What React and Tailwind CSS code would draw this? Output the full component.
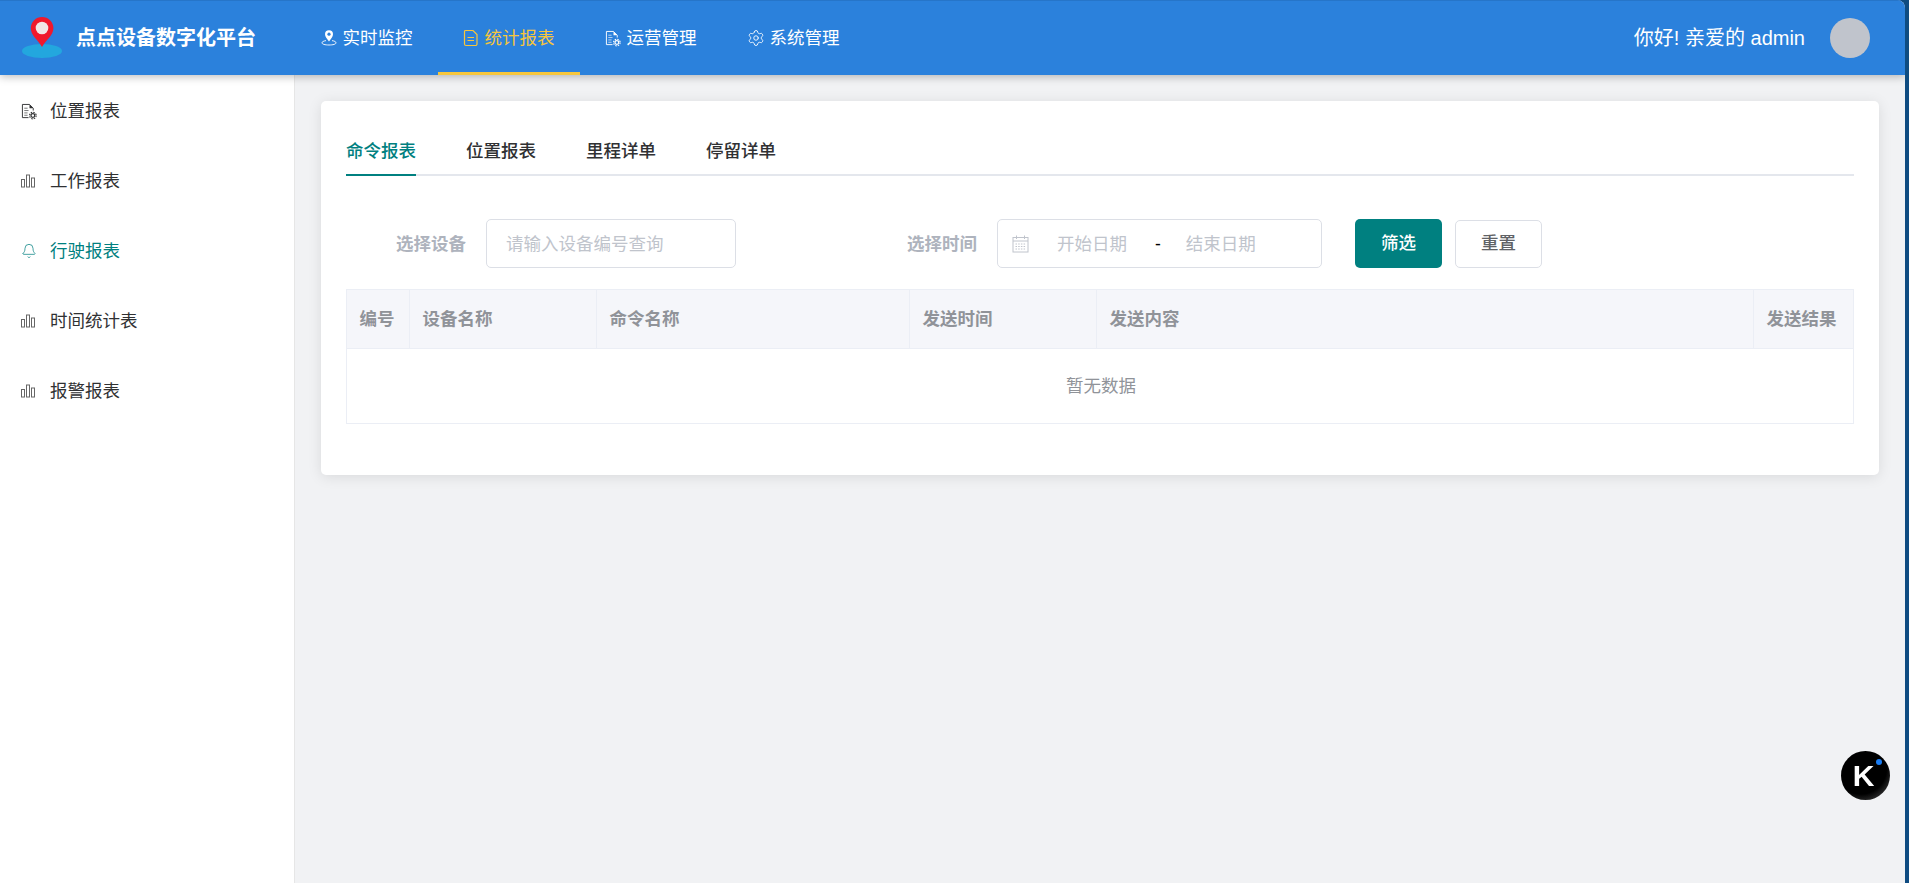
import { Settings, Bell } from "lucide-react";

const Logo = () => (
  <svg width="42" height="42" viewBox="0 0 42 42" className="shrink-0">
    <ellipse cx="21" cy="34" rx="20" ry="7" fill="#23a7de" />
    <path d="M21 30 C17 23 9.8 18.5 9.8 11.3 A11.3 11.3 0 0 1 32.4 11.3 C32.4 18.5 25 23 21 30 Z" fill="#f0182c" />
    <circle cx="21" cy="11" r="6.3" fill="#f1e6e6" />
  </svg>
);

const PinIcon = () => (
  <svg width="16" height="18" viewBox="0 0 16 18" fill="none" stroke="currentColor" className="shrink-0">
    <path
      d="M8 12.5 C6 9.5 4 7.8 4 5.2 A4 4 0 0 1 12 5.2 C12 7.8 10 9.5 8 12.5 Z"
      fill="currentColor"
      stroke="none"
    />
    <circle cx="8" cy="5.2" r="1.6" fill="#2b81dc" stroke="none" />
    <path d="M5 11.6 C2.4 12 1 12.8 1 13.8 C1 15.2 4 16 8 16 C12 16 15 15.2 15 13.8 C15 12.8 13.6 12 11 11.6" strokeWidth="0.9" />
  </svg>
);

const DocIcon = () => (
  <svg width="16" height="18" viewBox="0 0 16 18" fill="none" stroke="currentColor" strokeWidth="1.2" className="shrink-0">
    <path d="M2.5 1.5 H10 L14 5.5 V15 A1.5 1.5 0 0 1 12.5 16.5 H3 A1.5 1.5 0 0 1 1.5 15 V2.5 A1 1 0 0 1 2.5 1.5 Z" />
    <path d="M4.5 8.5 H11 M4.5 11.5 H11" />
  </svg>
);

const DocGearIcon = () => (
  <svg width="16" height="17" viewBox="0 0 17 18" fill="none" stroke="currentColor" className="shrink-0">
    <path d="M8 15.5 H1.5 V1.5 H9 L13 5.5 V8" strokeWidth="1" />
    <path d="M9 1.5 L13 5.5 H9 Z" fill="currentColor" stroke="none" />
    <path d="M3.5 5.5 H7 M3.5 8 H8 M3.5 10.5 H7 M3.5 13 H7" strokeWidth="1" opacity="0.7" />
    <circle cx="12.6" cy="13.3" r="2" strokeWidth="1.3" />
    <circle cx="12.6" cy="13.3" r="3.5" strokeWidth="1.2" strokeDasharray="1.6 1.15" />
  </svg>
);

const BarsIcon = () => (
  <svg width="15" height="14" viewBox="0 0 15 14" fill="none" stroke="#666" strokeWidth="1" className="shrink-0">
    <rect x="0.5" y="5.5" width="3" height="7.5" />
    <rect x="5.5" y="1" width="3" height="12" />
    <rect x="10.5" y="4" width="3" height="9" />
  </svg>
);

const DateIcon = () => (
  <svg width="17" height="18" viewBox="0 0 17 18" fill="none" stroke="currentColor" strokeWidth="1" className="shrink-0">
    <rect x="1" y="2.5" width="15" height="14.5" />
    <path d="M1 6 H16 M4.5 0.5 V4 M12.5 0.5 V4" />
    <path d="M3.5 9 H13.5 M3.5 11.5 H13.5 M3.5 14 H13.5" strokeDasharray="1.5 1.2" />
  </svg>
);

const navItems = [
  { label: "实时监控", icon: <PinIcon /> },
  { label: "统计报表", icon: <DocIcon />, active: true },
  { label: "运营管理", icon: <DocGearIcon /> },
  { label: "系统管理", icon: <Settings size={18} strokeWidth={1.2} className="-mr-[1px] shrink-0" /> },
];

const sideItems = [
  { label: "位置报表", icon: <DocGearIcon /> },
  { label: "工作报表", icon: <BarsIcon /> },
  { label: "行驶报表", icon: <Bell size={16} strokeWidth={1.1} className="shrink-0" />, active: true },
  { label: "时间统计表", icon: <BarsIcon /> },
  { label: "报警报表", icon: <BarsIcon /> },
];

const tabs = ["命令报表", "位置报表", "里程详单", "停留详单"];

const columns = [
  { label: "编号", width: "w-[63px]" },
  { label: "设备名称", width: "w-[187px]" },
  { label: "命令名称", width: "w-[313px]" },
  { label: "发送时间", width: "w-[187px]" },
  { label: "发送内容", width: "flex-1" },
  { label: "发送结果", width: "w-[99px]" },
];

const App = () => {
  return (
    <div className="flex h-[883px] w-full overflow-hidden bg-[#0f4c81] font-['Liberation_Sans','Noto_Sans_CJK_SC',sans-serif] text-[17.5px]">
      <div className="flex min-w-0 flex-1 flex-col rounded-tr-[8px] overflow-hidden bg-[#f1f2f4]">
        {/* Header */}
        <header className="relative z-10 flex h-[75px] shrink-0 items-center border-t border-[#2675c9] bg-[#2b81dc] pl-[21px] pr-[35px] text-white shadow-[0_2px_8px_rgba(0,0,0,0.25)]">
          <Logo />
          <h1 className="ml-[13px] w-[178px] whitespace-nowrap text-[20px] font-bold">点点设备数字化平台</h1>
          <nav className="ml-[41.5px] flex h-full">
            {navItems.map((item) => (
              <div
                key={item.label}
                className={
                  item.active
                    ? "flex h-full items-center gap-[6px] border-b-[3px] border-[#f7c63c] px-[25px] pt-[3px] text-[#f7c63c]"
                    : "flex h-full items-center gap-[6px] px-[25px]"
                }
              >
                {item.icon}
                <span>{item.label}</span>
              </div>
            ))}
          </nav>
          <div className="ml-auto flex items-center">
            <span className="text-[20px]">你好! 亲爱的 admin</span>
            <div className="ml-[25px] h-[40px] w-[40px] rounded-full bg-[#c0c4cc]" />
          </div>
        </header>

        <div className="flex min-h-0 flex-1">
          {/* Sidebar */}
          <aside className="w-[295px] shrink-0 border-r border-[#e6e6e6] bg-white pt-[1px]">
            {sideItems.map((item) => (
              <div
                key={item.label}
                className={
                  item.active
                    ? "flex h-[70px] items-center pl-[21px] text-[#008080]"
                    : "flex h-[70px] items-center pl-[21px] text-[#303133]"
                }
              >
                <span className="flex w-[29px]">{item.icon}</span>
                <span>{item.label}</span>
              </div>
            ))}
          </aside>

          {/* Content */}
          <main className="min-w-0 flex-1 p-[26px]">
            <div className="rounded-[5px] bg-white px-[25px] pb-[51px] pt-[25px] shadow-[0_2px_14px_rgba(0,0,0,0.1)]">
              <div className="flex h-[50px] gap-[50px] border-b-2 border-[#e4e7ed]">
                {tabs.map((tab, i) => (
                  <div
                    key={tab}
                    className={
                      i === 0
                        ? "-mb-[2px] flex items-center border-b-2 border-[#008080] pt-[3px] font-medium text-[#008080]"
                        : "flex items-center pt-[3px] font-medium text-[#303133]"
                    }
                  >
                    {tab}
                  </div>
                ))}
              </div>

              {/* Filter */}
              <div className="mt-[43px] flex h-[49px] items-center">
                <label className="ml-[50px] pt-[1px] font-bold text-[#aeb3bd]">选择设备</label>
                <div className="ml-[20px] flex h-full w-[250px] items-center rounded-[5px] border border-[#dcdfe6] pl-[19px] pt-[1px] text-[#c0c4cc]">
                  请输入设备编号查询
                </div>
                <label className="ml-[171px] pt-[1px] font-bold text-[#aeb3bd]">选择时间</label>
                <div className="ml-[20px] flex h-full w-[325px] items-center rounded-[5px] border border-[#dcdfe6] pl-[14px] pt-[1px] text-[#c0c4cc]">
                  <DateIcon />
                  <span className="ml-[28px] w-[70px]">开始日期</span>
                  <span className="ml-[28px] font-medium text-black">-</span>
                  <span className="ml-[25px]">结束日期</span>
                </div>
                <button className="ml-[33px] h-full w-[87px] rounded-[5px] bg-[#008080] font-medium text-white">筛选</button>
                <button className="ml-[13px] h-[48px] w-[87px] rounded-[5px] border border-[#dcdfe6] bg-white font-medium text-[#606266]">
                  重置
                </button>
              </div>

              {/* Table */}
              <div className="mt-[21px] border border-[#ebeef5]">
                <div className="flex h-[59px] border-b border-[#ebeef5] bg-[#f5f6fa] font-bold text-[#909399]">
                  {columns.map((col) => (
                    <div
                      key={col.label}
                      className={`${col.width} flex items-center border-r border-[#ebeef5] pl-[12.5px] last:border-r-0`}
                    >
                      {col.label}
                    </div>
                  ))}
                </div>
                <div className="flex h-[74px] items-center justify-center pl-[2px] text-[#909399]">暂无数据</div>
              </div>
            </div>
          </main>
        </div>
      </div>
      <div className="w-[4px] shrink-0" />

      {/* Floating badge */}
      <div className="fixed left-[1841px] top-[751px] flex h-[49px] w-[49px] items-center justify-center rounded-full bg-[radial-gradient(circle_at_40%_35%,#000_60%,#333_82%,#888_100%)]">
        <span className="-ml-[4px] font-['Liberation_Sans',sans-serif] text-[30px] font-bold leading-none text-white">K</span>
        <span className="absolute right-[8px] top-[8px] h-[6px] w-[6px] rounded-full bg-[#1a7cf2]" />
      </div>
    </div>
  );
};

export default App;
